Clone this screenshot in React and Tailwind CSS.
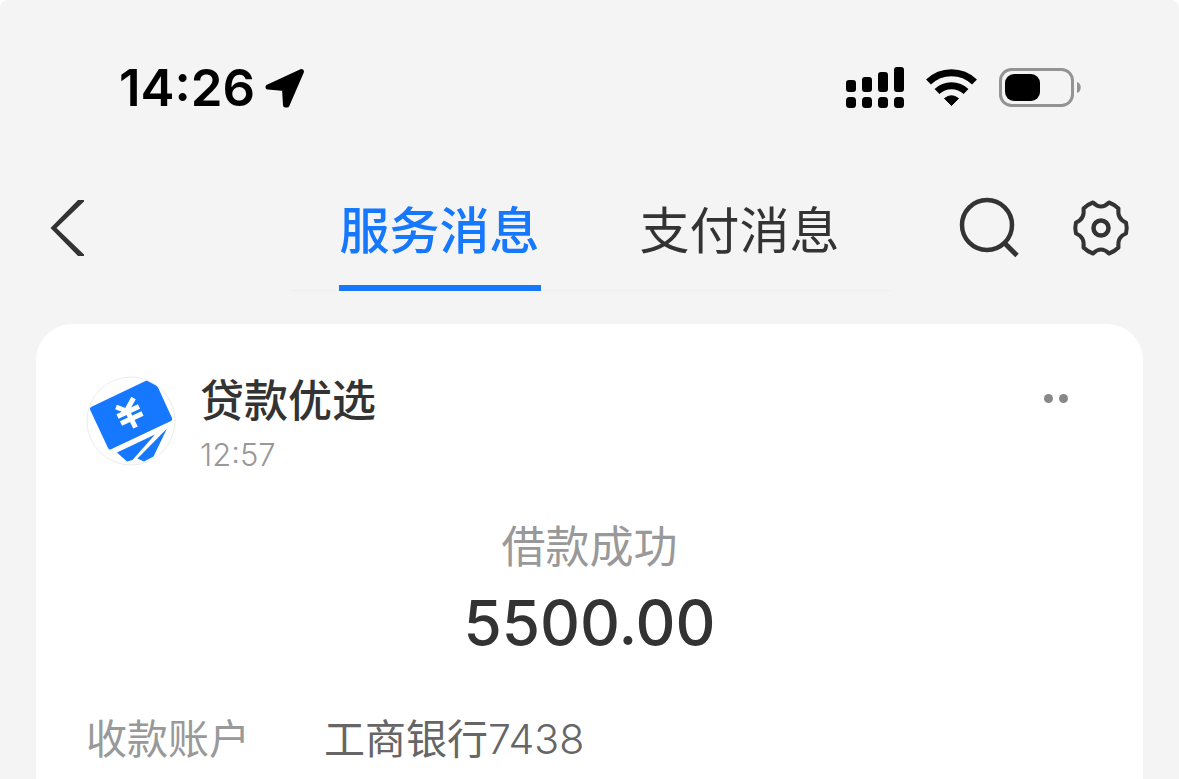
import { useState } from "react";

const TABS = [
  { id: "service", label: "服务消息" },
  { id: "payment", label: "支付消息" },
];

const StatusBar = () => (
  <div className="flex h-[176px] items-center justify-between pl-[119px] pr-[97px] text-black">
    <div className="flex items-center gap-[10px]">
      <span className="text-[51px] leading-[60px] font-semibold">14:26</span>
      <svg className="h-10 w-10" viewBox="0 0 40 40" fill="currentColor">
        <path
          d="M3 19L36.500 3.500L22 37H20.500L19.500 20.500Z"
          stroke="currentColor"
          strokeWidth="5"
          strokeLinejoin="round"
        />
      </svg>
    </div>

    <div className="flex items-center gap-[22px]">
      {/* Dual SIM signal */}
      <svg className="h-[42px] w-[58px]" viewBox="0 0 58 42" fill="currentColor">
        <rect x="0" y="13" width="10" height="12" rx="3" />
        <rect x="16" y="10" width="10" height="15" rx="3" />
        <rect x="32" y="5" width="10" height="20" rx="3" />
        <rect x="48" y="0" width="10" height="25" rx="3" />
        <rect x="0" y="30" width="10" height="11" rx="3.5" />
        <rect x="16" y="30" width="10" height="11" rx="3.5" />
        <rect x="32" y="30" width="10" height="11" rx="3.5" />
        <rect x="48" y="30" width="10" height="11" rx="3.5" />
      </svg>

      {/* Wi-Fi */}
      <svg className="h-[38px] w-[51px]" viewBox="0 0 51 38" fill="none">
        <path d="M2.500 13A33 33 0 0 1 48.500 13" stroke="currentColor" strokeWidth="7" />
        <path d="M11 22.500A21 21 0 0 1 40 22.500" stroke="currentColor" strokeWidth="7" />
        <path
          d="M18.500 29.500Q25.500 24 32.500 29.500L25.500 36.500Z"
          fill="currentColor"
          stroke="currentColor"
          strokeLinejoin="round"
        />
      </svg>

      {/* Battery */}
      <svg className="h-10 w-[83px]" viewBox="0 0 83 40" fill="none">
        <rect x="1.5" y="1.500" width="72" height="36" rx="11" stroke="#939393" strokeWidth="3" />
        <rect x="6" y="6" width="35" height="27" rx="9" fill="currentColor" />
        <path d="M78 14C83 15 83 24 78 25Z" fill="#939393" />
      </svg>
    </div>
  </div>
);

const NavBar = ({ active, onSelect }) => (
  <header className="grid grid-cols-[1fr_600px_1fr] pl-12 pr-12 text-[#333333]">
    <button type="button" aria-label="返回" className="mt-[22px] h-[60px] w-10 justify-self-start">
      <svg className="h-[60px] w-10" viewBox="0 0 40 60" fill="none">
        <path d="M30 2H36V3.500L8.500 30L36 56.500V58H30L2.500 30Z" fill="currentColor" />
      </svg>
    </button>

    <nav className="flex border-b border-[#eeeeee]">
      {TABS.map((tab) => (
        <button
          key={tab.id}
          type="button"
          onClick={() => onSelect(tab.id)}
          className="flex flex-1 justify-center"
        >
          <span
            className={
              active === tab.id
                ? "-mb-px h-[115px] border-b-[6px] border-[#1677ff] px-px pt-5 text-[50px] leading-[70px] font-medium text-[#1677ff]"
                : "h-[114px] px-px pt-5 text-[50px] leading-[70px]"
            }
          >
            {tab.label}
          </span>
        </button>
      ))}
    </nav>

    <div className="mt-[20px] flex h-16 items-center gap-[50px] justify-self-end">
      <button type="button" aria-label="搜索">
        <svg className="h-16 w-16" viewBox="0 0 64 64" fill="none" stroke="currentColor">
          <circle cx="30" cy="29" r="25" strokeWidth="4.500" />
          <path d="M47.500 47L60 59.500" strokeWidth="5" />
        </svg>
      </button>
      <button type="button" aria-label="设置">
        <svg className="h-16 w-[60px]" viewBox="0 0 60 64" fill="none" stroke="currentColor">
          <path
            d="M22 6.500Q30 14.500 38 6.500Q43.500 8.500 47.500 12.500Q46 23 55 26.500Q56.500 32 55 37.500Q46 41 47.500 51.500Q43.500 55.500 38 57.500Q30 49.500 22 57.500Q16.500 55.500 12.500 51.500Q14 41 5 37.500Q3.500 32 5 26.500Q14 23 12.500 12.500Q16.500 8.500 22 6.500Z"
            strokeWidth="4"
            strokeLinejoin="round"
          />
          <circle cx="30" cy="32" r="7.500" strokeWidth="4.500" />
        </svg>
      </button>
    </div>
  </header>
);

const LoanLogo = () => (
  <svg className="h-[90px] w-[90px] shrink-0" viewBox="0 0 90 90" fill="none">
    <circle cx="45" cy="45" r="44" fill="#ffffff" stroke="#ececec" />
    <path
      d="M5 31L59.500 5Q61 4.500 62.500 5.500L70 9.500Q71.500 10.500 72.500 12.500L86 42Q86.500 44 85 45L24.500 73.500Q23 74 22 72L4 33.500Q3.500 32 5 31Z"
      fill="#1677ff"
    />
    <path d="M31 76.500L69 58.500L46.500 84L41 85.500Z" fill="#1677ff" />
    <path d="M81 52.500L67.500 80.500L58 85.500L51.500 82.500Z" fill="#1677ff" />
    <g stroke="#ffffff" strokeWidth="5">
      <path d="M30 31L40.500 35L47.500 22" />
      <path d="M31.500 40.500L53 30.500" />
      <path d="M35 47.500L56.500 37.500" />
      <path d="M40.500 33.500L49.500 51.500" />
    </g>
  </svg>
);

const MessageCard = () => (
  <article className="mx-9 mt-[33px] flex-1 rounded-t-[36px] bg-white pr-[50px] pl-[50px] pt-[48px] text-[#333333]">
    <div className="flex items-start">
      <div className="mt-1">
        <LoanLogo />
      </div>
      <div className="ml-6 flex-1">
        <h2 className="text-[44px] leading-[58px] font-medium">贷款优选</h2>
        <p className="text-[31px] leading-[50px] font-light text-[#999999]">12:57</p>
      </div>
      <button type="button" aria-label="更多" className="mt-[22px] mr-[25px] flex gap-[6px]">
        <span className="h-[9px] w-[9px] rounded-full bg-[#888888]" />
        <span className="h-[9px] w-[9px] rounded-full bg-[#888888]" />
      </button>
    </div>

    {/* Amount */}
    <div className="mt-[31px] text-center">
      <p className="text-[44px] leading-[72px] text-[#999999]">借款成功</p>
      <p className="text-[62px] leading-[80px] font-medium">5500.00</p>
    </div>

    {/* Details */}
    <dl className="mt-[46px] flex text-[41px] leading-[60px]">
      <dt className="w-[238px] text-[#999999]">收款账户</dt>
      <dd className="text-[#666666]">
        工商银行<span className="font-light">7438</span>
      </dd>
    </dl>
  </article>
);

const App = () => {
  const [active, setActive] = useState("service");

  return (
    <div className="min-h-screen bg-white font-['Inter','Noto_Sans_CJK_SC',sans-serif]">
      <div className="flex min-h-screen flex-col rounded-t-lg bg-[#f4f4f4]">
        <StatusBar />
        <NavBar active={active} onSelect={setActive} />
        <MessageCard />
      </div>
    </div>
  );
};

export default App;
